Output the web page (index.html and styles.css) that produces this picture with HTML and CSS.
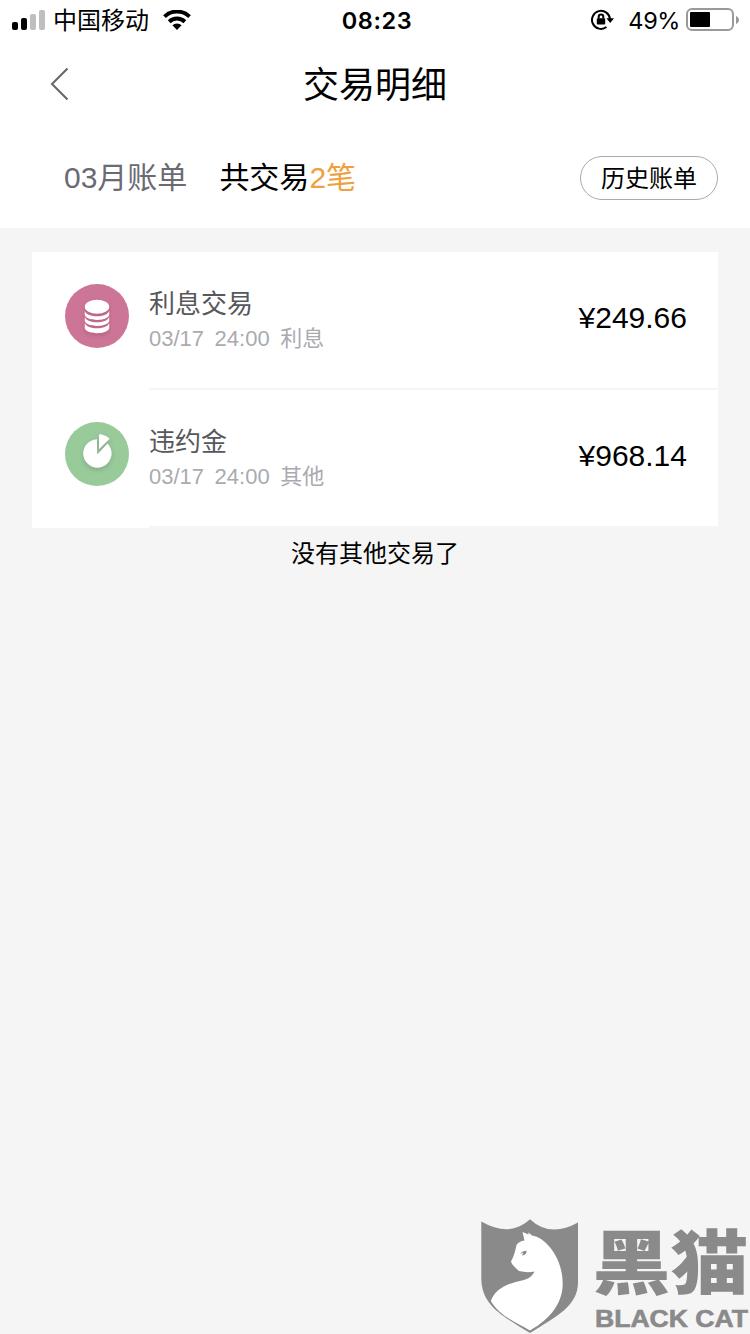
FILE: index.html
```html
<!DOCTYPE html>
<html lang="zh-CN">
<head>
<meta charset="utf-8">
<title>交易明细</title>
<link rel="stylesheet" href="styles.css">
</head>
<body>
<div class="screen">
  <header class="status">
    <div class="status-left">
      <svg class="signal" width="34" height="21" viewBox="0 0 34 21">
        <rect x="0" y="12" width="6" height="8" rx="2"/>
        <rect x="9" y="8" width="6" height="12" rx="2"/>
        <rect class="off" x="18" y="4" width="6" height="16" rx="2"/>
        <rect class="off" x="27" y="0" width="6" height="20" rx="2"/>
      </svg>
      <span class="carrier">中国移动</span>
      <svg class="wifi" width="28" height="20" viewBox="0 0 28 20">
        <path class="arc" d="M1.500 6.600a18 18 0 0 1 25 0"/>
        <path class="arc" d="M6.200 11.700a11.300 11.300 0 0 1 15.600 0"/>
        <path d="M9.400 15.300a6.800 6.800 0 0 1 9.200 0L14 20z"/>
      </svg>
    </div>
    <span class="clock">08:23</span>
    <div class="status-right">
      <svg class="lock" width="24" height="22" viewBox="0 0 24 22">
        <path class="ring" d="M15.500 18A9 9 0 1 1 19 10.500"/>
        <path d="M15.400 9.300h7.600l-3.800 4.600z"/>
        <rect x="5.800" y="9.300" width="8.400" height="6.200" rx=".8"/>
        <path class="shackle" d="M7.700 9.500V7.800a2.300 2.300 0 0 1 4.600 0v1.700"/>
      </svg>
      <span class="percent">49%</span>
      <svg class="battery" width="54" height="24" viewBox="0 0 54 24">
        <rect class="case" x="1" y="1" width="46" height="21" rx="5"/>
        <rect x="4" y="4" width="20" height="15" rx="1"/>
        <path class="cap" d="M50 8v8c4-1.600 4-6.400 0-8z"/>
      </svg>
    </div>
  </header>

  <nav class="navbar">
    <svg class="back" width="20" height="34" viewBox="0 0 20 34"><path d="M17.500 1.500L2 17l15.500 15.500"/></svg>
    <h1 class="title">交易明细</h1>
  </nav>

  <section class="summary">
    <span class="month">03月账单</span>
    <span class="count">共交易<span class="accent">2笔</span></span>
    <button class="history">历史账单</button>
  </section>

  <main class="content">
    <ul class="list">
      <li class="item">
        <svg class="icon" width="64" height="64" viewBox="0 0 64 64">
          <circle class="pink" cx="32" cy="32" r="32"/>
          <g class="mark">
            <ellipse cx="32" cy="22.800" rx="12.200" ry="7"/>
            <path d="M19.800 27c2 7 22.400 7 24.400 0v4c-2 6.600-22.400 6.600-24.400 0z"/>
            <path d="M19.800 33c2 7 22.400 7 24.400 0v4c-2 6.600-22.400 6.600-24.400 0z"/>
            <path d="M19.800 39c2 7 22.400 7 24.400 0v5.200c-2 6.600-22.400 6.600-24.400 0z"/>
          </g>
        </svg>
        <div class="detail">
          <div class="text">
            <span class="name">利息交易</span>
            <span class="meta"><span>03/17</span><span>24:00</span><span>利息</span></span>
          </div>
          <span class="amount">¥249.66</span>
        </div>
      </li>
      <li class="item">
        <svg class="icon" width="64" height="64" viewBox="0 0 64 64">
          <circle class="green" cx="32" cy="32" r="32"/>
          <g class="mark">
            <path d="M32 17.300A14.200 14.200 0 1 0 42.500 21.500L32.200 32.500z"/>
            <path d="M34 12.200q6 .2 10.700 4.500L34 27.300z"/>
          </g>
        </svg>
        <div class="detail">
          <div class="text">
            <span class="name">违约金</span>
            <span class="meta"><span>03/17</span><span>24:00</span><span>其他</span></span>
          </div>
          <span class="amount">¥968.14</span>
        </div>
      </li>
    </ul>
    <p class="end">没有其他交易了</p>
  </main>

  <svg class="watermark" width="280" height="124" viewBox="0 0 280 124">
    <path class="gray" d="M11.300 11.500Q40 28 60 9.200Q80 28 108 12.500V72C108 96 87 106 60 123C33 106 11.300 96 11.300 68z"/>
    <path class="cat" d="M52.500 22L58.500 24.500V22.500L62 25.500Q67 26 71 29C85 39 92.700 56 92.700 74C92.500 92 82 108 60 120.500C45 112 30 106 20.800 91C26 77 40 73 54 70Q62 67.500 64.500 61.500Q57 63 49 61C44.500 57 42 55 41 51.500C44 46 45 42 46.500 35Q49 31 54.500 30.500z"/>
    <path class="gray" d="M50.500 44q1-3 6-3.200q.5 4-4.500 4.800l1.500-3z"/>
    <text class="brand" transform="translate(122.500 79) scale(1 .9)" textLength="156" lengthAdjust="spacingAndGlyphs">黑猫</text>
    <text class="brand-en" x="125" y="116.500" textLength="153" lengthAdjust="spacingAndGlyphs">BLACK CAT</text>
  </svg>
</div>
</body>
</html>
```

FILE: styles.css
```css
* { box-sizing: border-box; }

body {
  margin: 0;
  background: #f5f5f5;
  color: #000;
  font-family: "Liberation Sans", "Noto Sans CJK SC", sans-serif;
}

.screen {
  position: relative;
  width: 750px;
  height: 1334px;
  overflow: hidden;
}

.status {
  display: grid;
  grid-template-columns: 1fr auto 1fr;
  align-items: center;
  height: 40px;
  padding: 0 10px 0 12px;
  background: #fff;
  font-family: Inter, "Noto Sans CJK SC", sans-serif;
  line-height: 38px;
}

.status span { padding-top: 2px; }

.status-left,
.status-right {
  display: flex;
  align-items: center;
}

.status-right { justify-content: flex-end; }

.signal { margin-right: 7px; }
.signal .off { fill: #bfbfbf; }
.carrier { font-size: 24px; }
.wifi { margin-left: 14px; }
.wifi .arc { fill: none; stroke: #000; stroke-width: 4; }

.clock {
  padding-left: 2px;
  font-size: 23.5px;
  font-weight: 600;
  letter-spacing: 0.6px;
}

.ring,
.shackle {
  fill: none;
  stroke: #000;
  stroke-width: 2;
}

.lock { margin-right: 13px; }
.percent { font-size: 23.5px; letter-spacing: -0.4px; margin-right: 6px; }
.battery .case { fill: none; stroke: #999; stroke-width: 2; }
.battery .cap { fill: #999; }

.navbar {
  display: grid;
  grid-template-columns: 70px 1fr 70px;
  align-items: center;
  height: 88px;
  background: #fff;
}

.back {
  justify-self: end;
  fill: none;
  stroke: #666;
  stroke-width: 2;
}

.title {
  margin: 0;
  padding-top: 4px;
  font-size: 36px;
  font-weight: 400;
  line-height: 84px;
  text-align: center;
}

.summary {
  display: flex;
  align-items: center;
  height: 100px;
  padding: 0 32px 0 64px;
  background: #fff;
  font-size: 30px;
}

.month,
.count { padding-bottom: 6px; }

.month { color: #6a6a72; }
.count { margin-left: 32px; }
.accent { color: #f0a040; }

.history {
  width: 138px;
  height: 44px;
  margin-left: auto;
  padding: 0 0 3px;
  border: 1px solid #aaa;
  border-radius: 22px;
  background: #fff;
  color: #000;
  font: inherit;
  font-size: 24px;
}

.content { padding: 24px 32px 0; }

.list {
  margin: 0;
  padding: 0;
  background: #fff;
  list-style: none;
}

.item {
  display: flex;
  height: 138px;
  padding-left: 33px;
}

.icon { margin: 32px 20px 0 0; }
.pink { fill: #cc7596; }
.green { fill: #98ca9a; }
.mark { fill: #fff; filter: drop-shadow(0 2px 2px rgba(80, 30, 60, 0.2)); }

.detail {
  display: flex;
  flex: 1;
  justify-content: space-between;
  padding-right: 31px;
  border-bottom: 2px solid #f5f5f5;
}

.text {
  display: flex;
  flex-direction: column;
  padding-top: 33px;
}

.name {
  color: #57575c;
  font-size: 26px;
  line-height: 38px;
}

.meta {
  display: flex;
  gap: 10.500px;
  color: #aaaab0;
  font-size: 22px;
  line-height: 32px;
}

.amount {
  font-size: 30px;
  line-height: 132px;
}

.end {
  margin: 0;
  padding-top: 1px;
  font-size: 24px;
  line-height: 50px;
  text-align: center;
}

.watermark {
  position: absolute;
  right: 0;
  bottom: 0;
}

.gray,
.brand,
.brand-en { fill: #8b8a8b; }
.cat { fill: #fff; }

.brand {
  font-family: "Noto Sans CJK SC", sans-serif;
  font-size: 78px;
  font-weight: 900;
}

.brand-en {
  font-size: 24px;
  font-weight: 700;
  stroke: #8b8a8b;
  stroke-width: 0.6;
}
```
